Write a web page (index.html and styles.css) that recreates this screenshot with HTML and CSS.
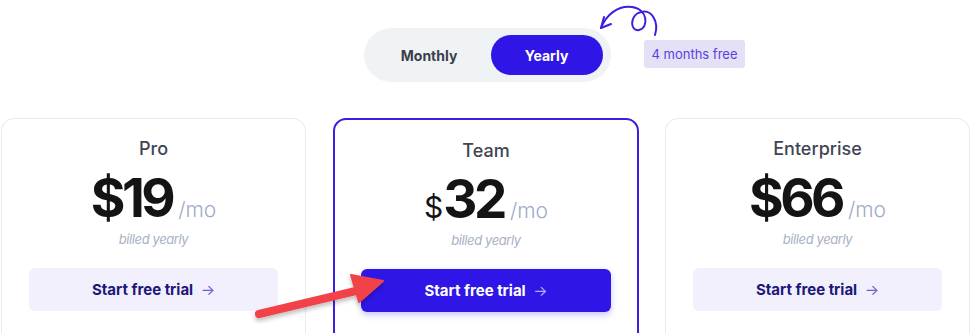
FILE: index.html
```html
<!DOCTYPE html>
<html lang="en">
	<head>
		<meta charset="UTF-8" />
		<meta name="viewport" content="width=device-width, initial-scale=1.0" />
		<title>Pricing</title>
		<link rel="stylesheet" href="styles.css">
	</head>
	<body>
		<div class="toggle-row">
			<div class="toggle">
				<button class="toggle-btn">Monthly</button>
				<button class="toggle-btn active">Yearly</button>
			</div>
			<svg class="swirl" width="70" height="45" viewBox="595 0 70 45">
				<path d="M655,35 C659,22 652,9 641,12 C629,15 630,32 639,30 C649,28 648,9 632,7 C618,5 606,15 601,28" fill="none" stroke="#3a1fe2" stroke-width="2" stroke-linecap="round" />
				<path d="M604,17 L601,28 L611,24" fill="none" stroke="#3a1fe2" stroke-width="2" stroke-linecap="round" stroke-linejoin="round" />
			</svg>
			<span class="badge">4 months free</span>
		</div>

		<div class="plans">
			<div class="plan">
				<h2 class="plan-name">Pro</h2>
				<div class="price">
					<span class="amount">$19</span>
					<span class="per">/mo</span>
				</div>
				<p class="billed">billed yearly</p>
				<button class="trial">Start free trial <span class="arrow">&rarr;</span></button>
			</div>

			<div class="plan featured">
				<h2 class="plan-name">Team</h2>
				<div class="price">
					<span class="currency">$</span><span class="amount">32</span>
					<span class="per">/mo</span>
				</div>
				<p class="billed">billed yearly</p>
				<button class="trial primary">Start free trial <span class="arrow">&rarr;</span></button>
			</div>

			<div class="plan">
				<h2 class="plan-name">Enterprise</h2>
				<div class="price">
					<span class="amount">$66</span>
					<span class="per">/mo</span>
				</div>
				<p class="billed">billed yearly</p>
				<button class="trial">Start free trial <span class="arrow">&rarr;</span></button>
			</div>
		</div>

		<!-- annotation arrow drawn over the page -->
		<svg class="pointer" width="975" height="333" viewBox="0 0 975 333">
			<defs>
				<filter id="shade" x="-20%" y="-40%" width="140%" height="180%">
					<feDropShadow dx="0" dy="3" stdDeviation="2" flood-color="#000" flood-opacity="0.25" />
				</filter>
			</defs>
			<g filter="url(#shade)" fill="#f2424a" stroke="#f2424a">
				<line x1="259" y1="314" x2="360" y2="290" stroke-width="8" stroke-linecap="round" />
				<polygon points="383,281 351,275 359,302" stroke-width="2" stroke-linejoin="round" />
			</g>
		</svg>
	</body>
</html>
```

FILE: styles.css
```css
body {
	margin: 0;
	font-family: Inter, "Noto Sans", sans-serif;
	background: #fff;
	color: #111;
	overflow: hidden;
}
.toggle-row {
	position: relative;
	display: flex;
	justify-content: center;
	padding-top: 28px;
}
.toggle {
	display: flex;
	align-items: center;
	gap: 10px;
	width: 247px;
	height: 54px;
	box-sizing: border-box;
	padding: 0 8px 0 14px;
	margin-left: -1px;
	background: #eff3f6;
	border-radius: 27px;
}
.toggle-btn {
	font-family: inherit;
	font-size: 14px;
	font-weight: 700;
	border: none;
	background: none;
	color: #3a3f4a;
	height: 40px;
	border-radius: 20px;
	width: 106px;
	padding: 0;
}
.toggle-btn.active {
	background: #2f16e6;
	color: #fff;
	width: 115px;
}
.swirl {
	position: absolute;
	left: 595px;
	top: 0;
}
.badge {
	position: absolute;
	left: 644px;
	top: 40px;
	width: 101px;
	height: 28px;
	line-height: 28px;
	text-align: center;
	font-size: 13px;
	color: #5b3fdc;
	background: #e4e0f6;
	border-radius: 3px;
}
.plans {
	display: grid;
	grid-template-columns: repeat(3, 305px);
	gap: 27px;
	width: 971px;
	margin: 36px 0 0 1px;
}
.plan {
	height: 240px;
	box-sizing: border-box;
	border: 1px solid #e8eaee;
	border-radius: 13px;
	padding: 18px 27px 0;
	text-align: center;
}
.plan.featured {
	border: 2px solid #3a1fe2;
	padding: 18px 26px 0;
	width: 306px;
}
.plan-name {
	margin: 0;
	font-size: 18px;
	font-weight: 500;
	line-height: 24px;
	color: #3f4553;
}
.featured .plan-name {
	margin-top: 1px;
	margin-bottom: -1px;
}
.price {
	display: flex;
	justify-content: center;
	align-items: baseline;
	margin-top: 10px;
	height: 54px;
	line-height: 54px;
}
.amount {
	font-size: 53px;
	font-weight: 700;
	letter-spacing: -3.5px;
	color: #141414;
}
.currency {
	font-size: 30px;
	font-weight: 400;
	color: #141414;
}
.per {
	font-size: 21px;
	font-weight: 300;
	color: #9eacc7;
	margin-left: 6px;
}
.billed {
	margin: 5px 0 0;
	font-size: 13px;
	font-style: italic;
	color: #a8b1c4;
	letter-spacing: -0.4px;
	line-height: 18px;
}
.trial {
	display: block;
	width: 100%;
	height: 43px;
	margin-top: 20px;
	font-family: inherit;
	font-size: 15px;
	font-weight: 700;
	color: #1d177a;
	background: #f2f0fc;
	border: none;
	border-radius: 6px;
}
.trial .arrow {
	font-weight: 400;
	color: #6a5fcf;
	margin-left: 4px;
}
.trial.primary {
	background: #2f16e6;
	color: #fff;
	box-shadow: 0 3px 6px rgba(47, 22, 230, 0.25);
}
.trial.primary .arrow {
	color: #b7aef5;
}
.pointer {
	position: absolute;
	left: 0;
	top: 0;
	pointer-events: none;
}
```
